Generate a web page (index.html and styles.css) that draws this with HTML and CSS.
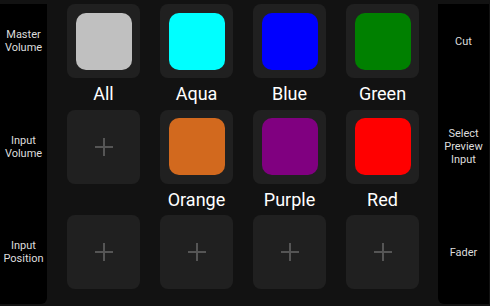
FILE: index.html
```html
<!DOCTYPE html>
<html lang="en">
<head>
    <meta charset="UTF-8">
    <meta name="viewport" content="width=device-width, initial-scale=1.0">
    <title>Switcher</title>
    <link rel="stylesheet" href="styles.css">
</head>
<body>
<div class="panel">
    <div class="side side-left">
        <div class="side-item">Master<br>Volume</div>
        <div class="side-item">Input<br>Volume</div>
        <div class="side-item">Input<br>Position</div>
    </div>

    <div class="grid">
        <div class="cell">
            <div class="tile"><span class="swatch" style="background-color: #c0c0c0"></span></div>
            <div class="label">All</div>
        </div>
        <div class="cell">
            <div class="tile"><span class="swatch" style="background-color: #00ffff"></span></div>
            <div class="label">Aqua</div>
        </div>
        <div class="cell">
            <div class="tile"><span class="swatch" style="background-color: #0000ff"></span></div>
            <div class="label">Blue</div>
        </div>
        <div class="cell">
            <div class="tile"><span class="swatch" style="background-color: #008000"></span></div>
            <div class="label">Green</div>
        </div>

        <div class="cell">
            <div class="tile empty"><span class="plus"></span></div>
            <div class="label"></div>
        </div>
        <div class="cell">
            <div class="tile"><span class="swatch" style="background-color: #d2691e"></span></div>
            <div class="label">Orange</div>
        </div>
        <div class="cell">
            <div class="tile"><span class="swatch" style="background-color: #800080"></span></div>
            <div class="label">Purple</div>
        </div>
        <div class="cell">
            <div class="tile"><span class="swatch" style="background-color: #ff0000"></span></div>
            <div class="label">Red</div>
        </div>

        <div class="cell">
            <div class="tile empty"><span class="plus"></span></div>
        </div>
        <div class="cell">
            <div class="tile empty"><span class="plus"></span></div>
        </div>
        <div class="cell">
            <div class="tile empty"><span class="plus"></span></div>
        </div>
        <div class="cell">
            <div class="tile empty"><span class="plus"></span></div>
        </div>
    </div>

    <div class="side side-right">
        <div class="side-item">Cut</div>
        <div class="side-item">Select<br>Preview<br>Input</div>
        <div class="side-item">Fader</div>
    </div>
</div>
</body>
</html>
```

FILE: styles.css
```css
body {
    margin: 0;
    background-color: #121212;
    font-family: Roboto, "Liberation Sans", sans-serif;
    color: #fff;
    width: 490px;
    height: 306px;
    overflow: hidden;
}
.panel {
    display: flex;
    padding-top: 4px;
    height: 300px;
}
.side {
    background-color: #000;
    display: flex;
    flex-direction: column;
    gap: 31.5px;
    font-size: 11px;
    line-height: 13px;
    color: #ddd;
    text-align: center;
}
.side-left {
    width: 47px;
    border-radius: 0 0 6px 0;
}
.side-right {
    width: 51px;
    margin-left: 19px;
    border-radius: 0 0 0 6px;
}
.side-item {
    height: 74px;
    display: flex;
    align-items: center;
    justify-content: center;
}
.grid {
    margin-left: 20px;
    display: grid;
    grid-template-columns: repeat(4, 73px);
    column-gap: 20px;
    align-content: start;
}
.cell {
    display: flex;
    flex-direction: column;
}
.tile {
    height: 74px;
    background-color: #202020;
    border-radius: 8px;
    display: flex;
    align-items: center;
    justify-content: center;
}
.swatch {
    width: 56px;
    height: 57px;
    border-radius: 10px;
}
.label {
    height: 31.5px;
    display: flex;
    align-items: center;
    justify-content: center;
    font-size: 18px;
}
.plus {
    position: relative;
    width: 18px;
    height: 18px;
}
.plus::before,
.plus::after {
    content: "";
    position: absolute;
    background-color: #555;
}
.plus::before {
    left: 0;
    right: 0;
    top: 8px;
    height: 2px;
}
.plus::after {
    top: 0;
    bottom: 0;
    left: 8px;
    width: 2px;
}
```
